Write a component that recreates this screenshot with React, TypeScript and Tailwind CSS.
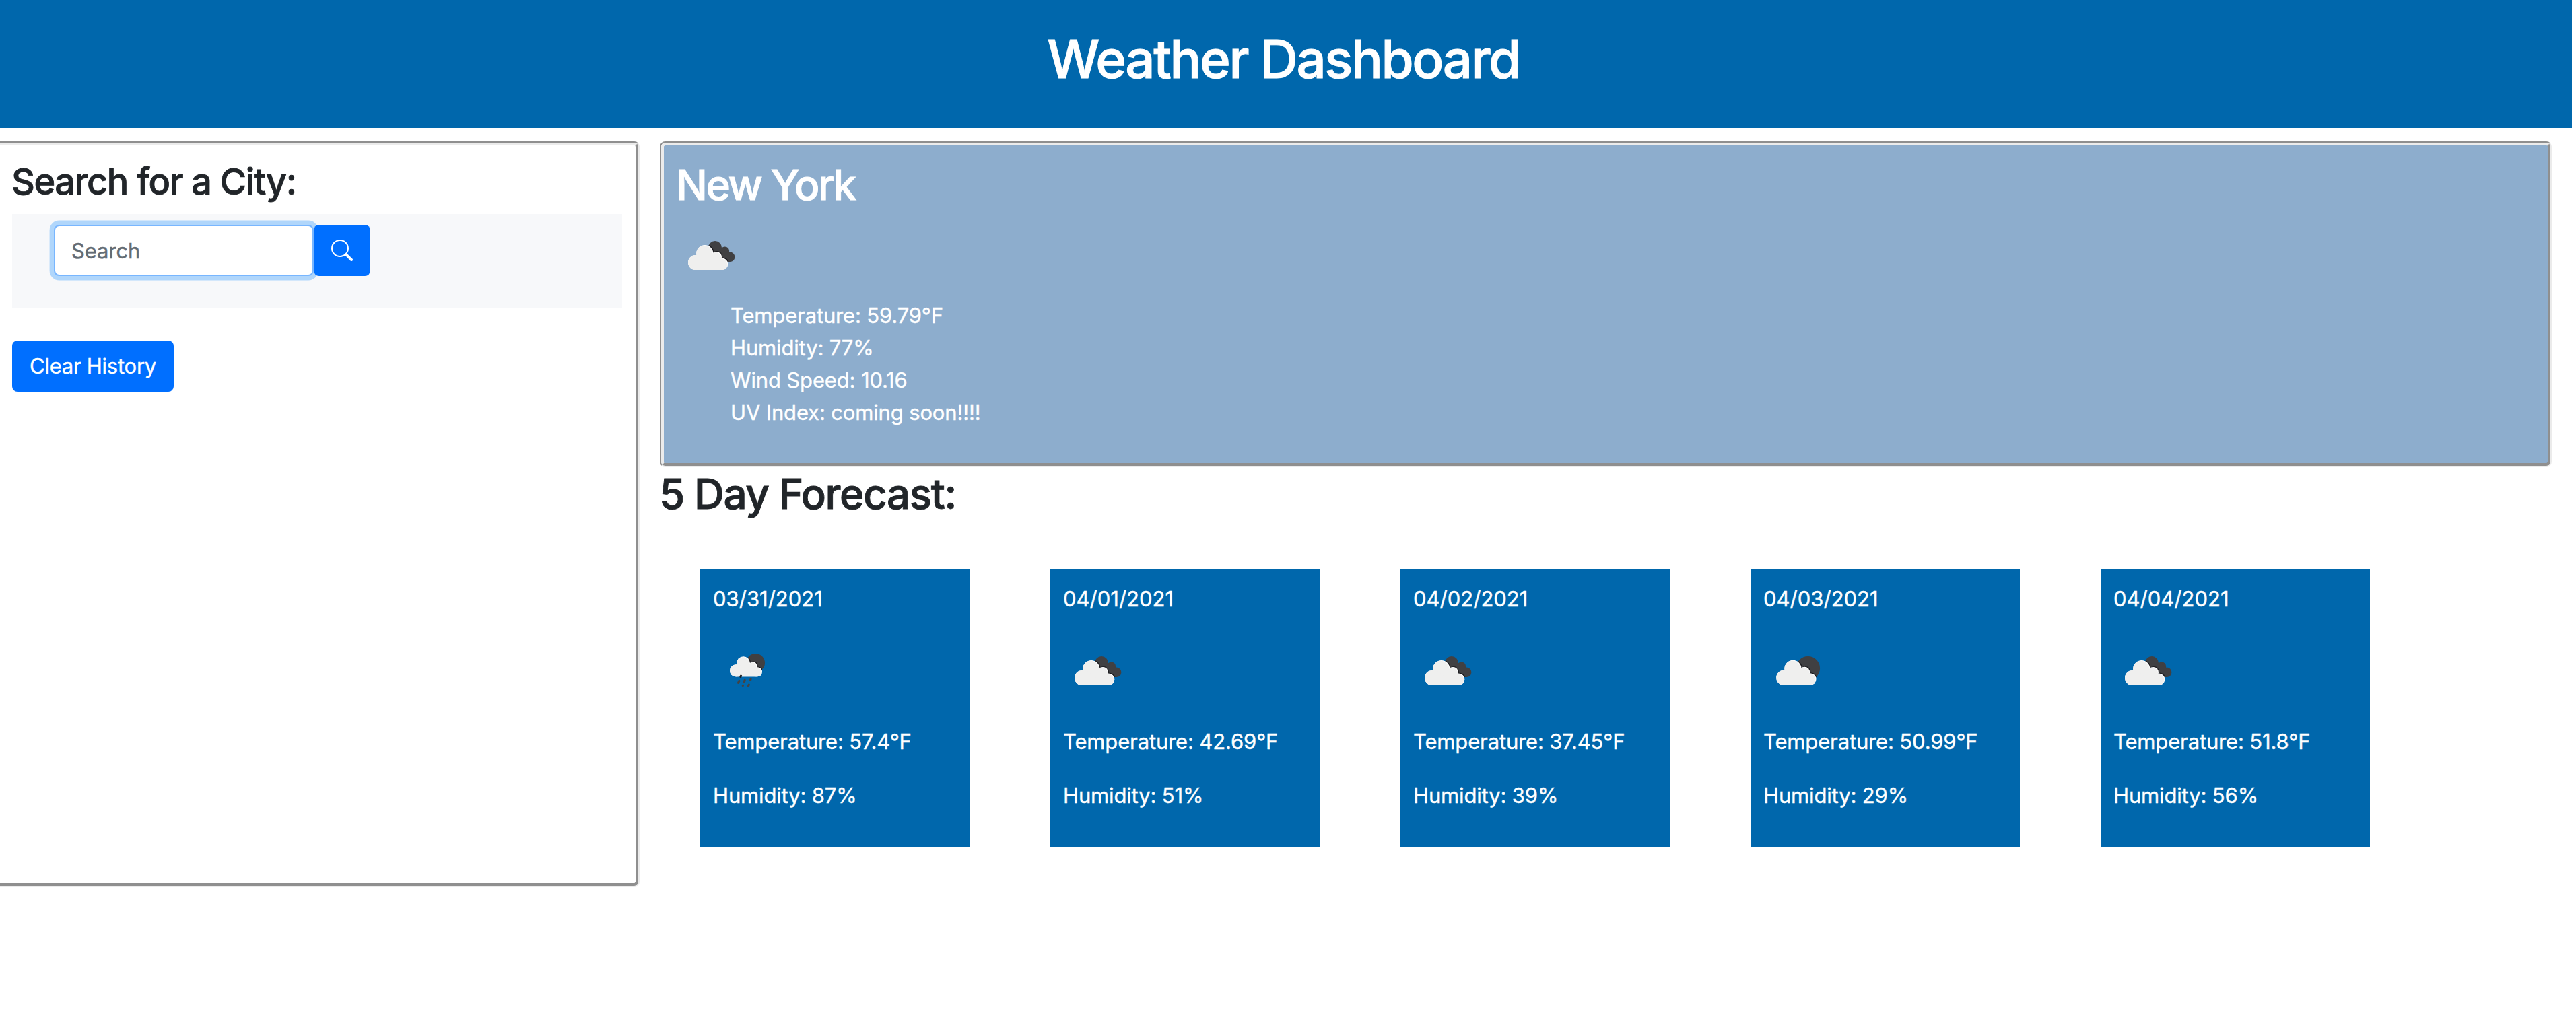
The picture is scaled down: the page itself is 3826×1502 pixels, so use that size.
import type { ReactNode } from "react";

type Sky = "broken" | "few" | "rain";

const forecast: { date: string; sky: Sky; temp: string; humidity: string }[] = [
  { date: "03/31/2021", sky: "rain", temp: "57.4", humidity: "87" },
  { date: "04/01/2021", sky: "broken", temp: "42.69", humidity: "51" },
  { date: "04/02/2021", sky: "broken", temp: "37.45", humidity: "39" },
  { date: "04/03/2021", sky: "few", temp: "50.99", humidity: "29" },
  { date: "04/04/2021", sky: "broken", temp: "51.8", humidity: "56" },
];

function CloudShape() {
  return (
    <>
      <circle cx="27" cy="61" r="11" />
      <circle cx="40.8" cy="47.5" r="12.5" />
      <circle cx="58" cy="53" r="8" />
      <circle cx="66.5" cy="63.2" r="8.8" />
      <path d="M27 72V56L40 48H58L66.5 58V72Z" />
    </>
  );
}

function RainCloudShape() {
  return (
    <>
      <circle cx="33" cy="50.3" r="9" />
      <circle cx="44.1" cy="39.2" r="9.9" />
      <circle cx="58.2" cy="43.4" r="6.1" />
      <circle cx="65" cy="52.3" r="7" />
      <path d="M33 59.3V46L44 40H58L65 48V59.3Z" />
    </>
  );
}

function DarkCloudShape() {
  return (
    <>
      <circle cx="56" cy="39" r="10" />
      <circle cx="70.6" cy="44" r="6.6" />
      <circle cx="78.2" cy="52.8" r="7.2" />
      <path d="M56 39H70L78 48V60H68L54 48Z" />
    </>
  );
}

function SkyIcon({ sky, id }: { sky: Sky; id: string }) {
  const cloud = sky === "rain" ? <RainCloudShape /> : <CloudShape />;
  const back =
    sky === "broken" ? (
      <DarkCloudShape />
    ) : sky === "few" ? (
      <circle cx="65.3" cy="46.8" r="17.8" />
    ) : (
      <circle cx="62.2" cy="38.7" r="13.8" />
    );
  const shift = sky === "few" ? "translate(2.2 -0.2)" : undefined;
  return (
    <svg className="block size-[100px]" viewBox="0 0 100 100">
      <clipPath id={`back-${id}`}>{back}</clipPath>
      <g fill="#404042">{back}</g>
      <g clipPath={`url(#back-${id})`}>
        <g transform={shift}>
          <g transform="translate(1.1 -0.9)" fill="#1c1c1f">
            {cloud}
          </g>
        </g>
      </g>
      <clipPath id={`cloud-${id}`}>{cloud}</clipPath>
      <g transform={shift}>
        <g fill="#ffffff">{cloud}</g>
        <g clipPath={`url(#cloud-${id})`}>
          <g transform="translate(-1 0.8)" fill="#efefee">
            {cloud}
          </g>
          <g transform="translate(0.8 0)" fill="#efefee">
            {sky === "rain" ? (
              <path d="M24 50V59.3H66V52H50L34 40V36H30Z" />
            ) : (
              <path d="M16 61V72H67V63H50L30 48V40H26Z" />
            )}
          </g>
        </g>
      </g>
      {sky === "rain" && (
        <g stroke="#434345" strokeWidth="3.2" strokeLinecap="round">
          <path d="M40.5 58.1L39.9 59.4" stroke="#1c1c1f" />
          <path d="M37.9 65.5L36.5 68.4" />
          <path d="M46.2 64.5L45 67.3" />
          <path d="M55 63L54.6 64.2" />
          <path d="M43.4 72.3L43.3 72.5" />
          <path d="M52.3 71.1L51.3 73.4" />
        </g>
      )}
    </svg>
  );
}

function SearchIcon() {
  return (
    <svg className="size-8" viewBox="0 0 16 16" fill="currentColor">
      <path
        fillRule="evenodd"
        d="M10.442 10.442a1 1 0 0 1 1.415 0l3.85 3.85a1 1 0 0 1-1.414 1.415l-3.85-3.85a1 1 0 0 1 0-1.415z"
      />
      <path
        fillRule="evenodd"
        d="M6.5 12a5.5 5.5 0 1 0 0-11 5.5 5.5 0 0 0 0 11zM13 6.5a6.5 6.5 0 1 1-13 0 6.5 6.5 0 0 1 13 0z"
      />
    </svg>
  );
}

/* Grooved frame: thin outer line with a wider inner line in the opposite shade. */
function Frame({ className, innerClassName, children }: { className: string; innerClassName: string; children: ReactNode }) {
  return (
    <section
      className={`flex flex-col rounded-lg border-2 border-t-[#8f8f8f] border-l-[#8f8f8f] border-r-[#ebebeb] border-b-[#ebebeb] ${className}`}
    >
      <div
        className={`grow rounded-md border-4 border-t-[#ebebeb] border-l-[#ebebeb] border-r-[#8f8f8f] border-b-[#8f8f8f] p-5 ${innerClassName}`}
      >
        {children}
      </div>
    </section>
  );
}

export default function App() {
  return (
    <div className="h-[1502px] w-[3826px] overflow-hidden bg-white font-[Inter,sans-serif] text-[31px] leading-[48px] tracking-[-0.15px] text-[#212529] [-webkit-text-stroke-width:0.4px]">
      <header className="h-[190px] w-[3820px] bg-[#0067ac] pt-10 pr-2 text-center text-white">
        <h1 className="text-[78px] leading-[96px] font-medium tracking-[-2.4px] [-webkit-text-stroke-width:1px]">
          Weather Dashboard
        </h1>
      </header>

      <main className="mt-5 flex items-start gap-[30px]">
        <Frame className="-ml-2 h-[1108px] w-[958px] shrink-0" innerClassName="">
          <h2 className="-ml-px text-[54px] leading-[67px] font-medium tracking-[-1.4px] [-webkit-text-stroke-width:0.8px]">
            Search for a City:
          </h2>
          <nav className="mt-[15px] h-[140px] bg-[#f7f8fa] pt-4 pl-[62px]">
            <form className="flex">
              <input
                type="search"
                placeholder="Search"
                className="relative h-[76px] w-[386px] rounded-lg border-2 border-[#78b6ff] bg-white px-6 tracking-[-0.1px] shadow-[0_0_0_6.4px_#b0d6fb] outline-none placeholder:text-[#636c74] placeholder:opacity-100"
              />
              <button
                type="button"
                aria-label="Search"
                className="relative flex h-[76px] w-[84px] items-center justify-center rounded-lg bg-[#006fff] text-white"
              >
                <SearchIcon />
              </button>
            </form>
          </nav>
          <button
            type="button"
            className="mt-12 h-[76px] w-60 rounded-lg bg-[#006fff] tracking-[-0.25px] text-white"
          >
            Clear History
          </button>
        </Frame>

        <div className="w-[2810px] shrink-0">
          <Frame className="h-[484px]" innerClassName="bg-[#8dadcd] text-white">
            <h2 className="-ml-0.5 text-[62px] leading-[77px] font-medium tracking-[-2.4px] [-webkit-text-stroke-width:0.9px]">
              New York
            </h2>
            <div className="mt-4">
              <SkyIcon sky="broken" id="now" />
            </div>
            <ul className="mt-4 pl-[79px]">
              <li>Temperature: 59.79°F</li>
              <li>Humidity: 77%</li>
              <li>Wind Speed: 10.16</li>
              <li>UV Index: coming soon!!!!</li>
            </ul>
          </Frame>

          <h2 className="-ml-px pt-px text-[62px] leading-[77px] font-medium tracking-[-1.4px] [-webkit-text-stroke-width:0.9px]">
            5 Day Forecast:
          </h2>

          <div className="mt-[74px] ml-[60px] flex gap-[120px]">
            {forecast.map((day) => (
              <article key={day.date} className="h-[412px] w-[400px] bg-[#0067ac] p-5 text-white">
                <p className="-ml-px tracking-normal">{day.date}</p>
                <div className="my-8">
                  <SkyIcon sky={day.sky} id={day.date.replaceAll("/", "-")} />
                </div>
                <p className="-ml-px">Temperature: {day.temp}°F</p>
                <p className="mt-8 -ml-px">Humidity: {day.humidity}%</p>
              </article>
            ))}
          </div>
        </div>
      </main>
    </div>
  );
}
